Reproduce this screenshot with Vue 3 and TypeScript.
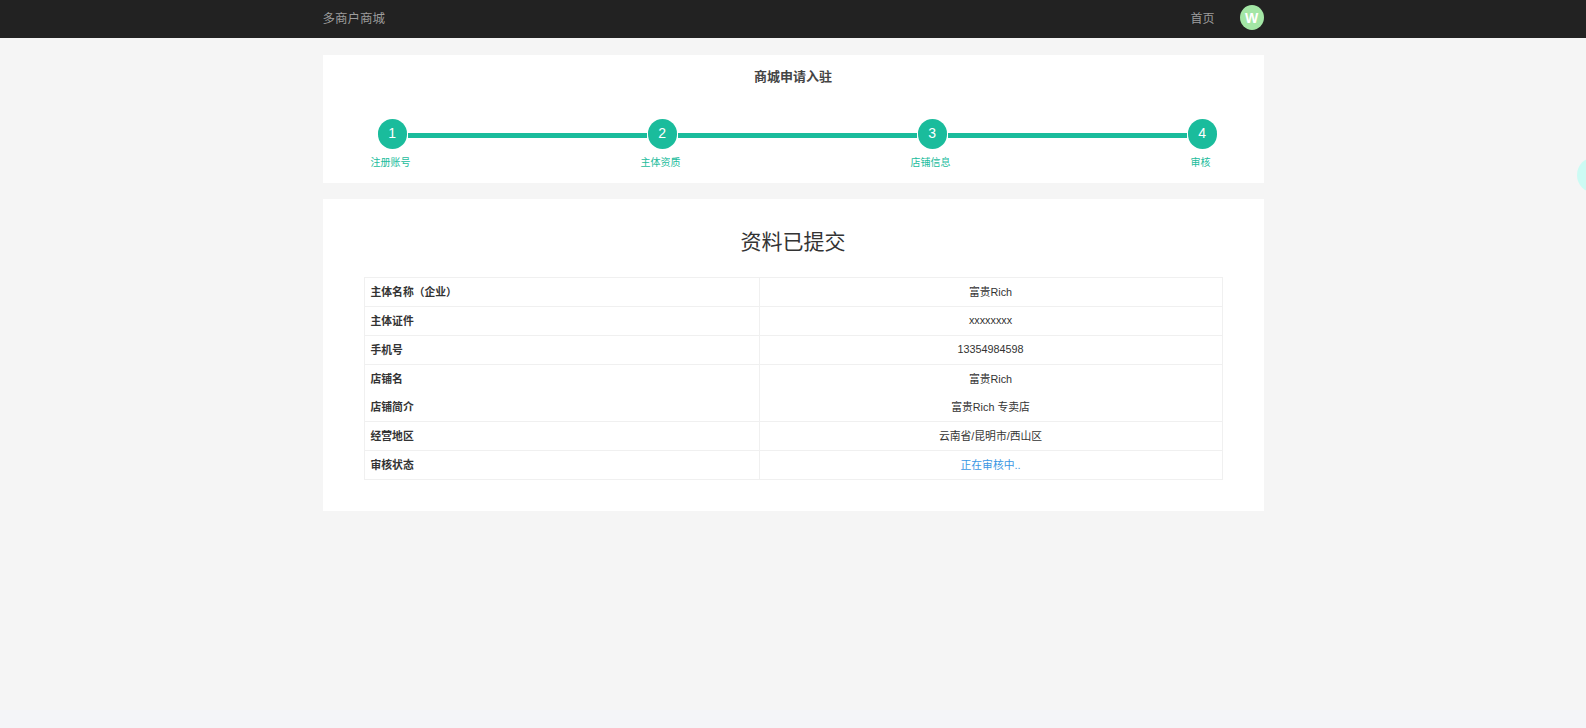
<script setup lang="ts">
const steps: string[] = ['注册账号', '主体资质', '店铺信息', '审核']
const rows: { label: string; value: string; cls?: string; noLine?: boolean }[] = [
  { label: '主体名称（企业）', value: '富贵Rich' },
  { label: '主体证件', value: 'xxxxxxxx' },
  { label: '手机号', value: '13354984598' },
  { label: '店铺名', value: '富贵Rich', noLine: true },
  { label: '店铺简介', value: '富贵Rich 专卖店' },
  { label: '经营地区', value: '云南省/昆明市/西山区' },
  { label: '审核状态', value: '正在审核中..', cls: 'status' },
]
</script>

<template>
  <div class="page">
    <header class="topbar">
      <div class="topbar-inner">
        <span class="brand">多商户商城</span>
        <nav class="nav">
          <span class="home">首页</span>
          <span class="avatar">W</span>
        </nav>
      </div>
    </header>

    <main class="content">
      <section class="card steps-card">
        <h2 class="steps-title">商城申请入驻</h2>
        <div class="track">
          <template v-for="(s, i) in steps" :key="s">
            <span class="dot">{{ i + 1 }}</span>
            <span v-if="i < steps.length - 1" class="line"></span>
          </template>
        </div>
        <div class="labels">
          <span v-for="s in steps" :key="s" class="label">{{ s }}</span>
        </div>
      </section>

      <section class="card result-card">
        <h1 class="result-title">资料已提交</h1>
        <table class="info">
          <colgroup>
            <col class="col-a" />
            <col />
          </colgroup>
          <tbody>
            <tr v-for="r in rows" :key="r.label" :class="{ 'no-line': r.noLine }">
              <th>{{ r.label }}</th>
              <td :class="r.cls">{{ r.value }}</td>
            </tr>
          </tbody>
        </table>
      </section>
    </main>

    <div class="float-ball"></div>
  </div>
</template>

<style>
html,
body {
  margin: 0;
  background: #f4f5f8;
  overflow: hidden;
}
</style>

<style scoped>
.page {
  position: relative;
  height: 710px;
  background: #f5f5f5;
  font-family: "Liberation Sans", "Noto Sans CJK SC", sans-serif;
  color: #333;
  overflow: hidden;
}
.topbar {
  height: 38px;
  box-sizing: border-box;
  padding-bottom: 3px;
  background: #222;
}
.topbar-inner {
  width: 941px;
  height: 100%;
  margin: 0 auto;
  display: flex;
  align-items: center;
  justify-content: space-between;
}
.brand {
  font-size: 12.5px;
  color: #9d9d9d;
}
.nav {
  display: flex;
  align-items: center;
  gap: 25px;
}
.home {
  font-size: 12px;
  color: #9d9d9d;
}
.avatar {
  width: 24px;
  height: 25px;
  border-radius: 50%;
  background: #a3e6a5;
  color: #fff;
  font-size: 14px;
  font-weight: 700;
  display: flex;
  align-items: center;
  justify-content: center;
}
.content {
  width: 941px;
  margin: 17px auto 0;
  display: flex;
  flex-direction: column;
  gap: 16px;
}
.card {
  background: #fff;
}
.steps-card {
  height: 128px;
  box-sizing: border-box;
  padding-top: 14px;
}
.steps-title {
  margin: 0;
  font-size: 13px;
  line-height: 16px;
  font-weight: 700;
  text-align: center;
  color: #444;
}
.track {
  display: flex;
  align-items: flex-start;
  margin-top: 34px;
  padding: 0 46.5px 0 55px;
}
.dot {
  width: 29.5px;
  height: 29.5px;
  box-sizing: border-box;
  padding-bottom: 2px;
  border-radius: 50%;
  background: #1abc9c;
  color: #fff;
  font-size: 14px;
  display: flex;
  align-items: center;
  justify-content: center;
  flex: none;
}
.line {
  flex: 1;
  height: 5px;
  margin: 14px 1px 0;
  background: #1abc9c;
}
.labels {
  display: flex;
  justify-content: space-between;
  margin-top: 7px;
  padding: 0 43px 0 48px;
}
.label {
  width: 40px;
  font-size: 10px;
  line-height: 14px;
  text-align: center;
  color: #1abc9c;
}
.result-card {
  height: 312px;
  box-sizing: border-box;
  padding: 28px 41px 0;
}
.result-title {
  margin: 0 0 20px;
  font-size: 21px;
  line-height: 30px;
  font-weight: 400;
  text-align: center;
  color: #333;
}
.info {
  width: 859px;
  table-layout: fixed;
  border-collapse: collapse;
  font-size: 10.8px;
}
.col-a {
  width: 395px;
}
.info th,
.info td {
  height: 26px;
  padding: 0 6px 2px;
  border: 1px solid #f0f0f0;
}
.info th {
  text-align: left;
  font-weight: 700;
  color: #333;
}
.info td {
  text-align: center;
  color: #333;
}
.info tr.no-line th,
.info tr.no-line td {
  border-bottom: none;
}
.info tr.no-line + tr th,
.info tr.no-line + tr td {
  border-top: none;
}
.info td.status {
  color: #3b97e3;
}
.float-ball {
  position: absolute;
  left: 1577px;
  top: 157px;
  width: 36px;
  height: 36px;
  border-radius: 50%;
  background: #ccfbf4;
}
</style>
